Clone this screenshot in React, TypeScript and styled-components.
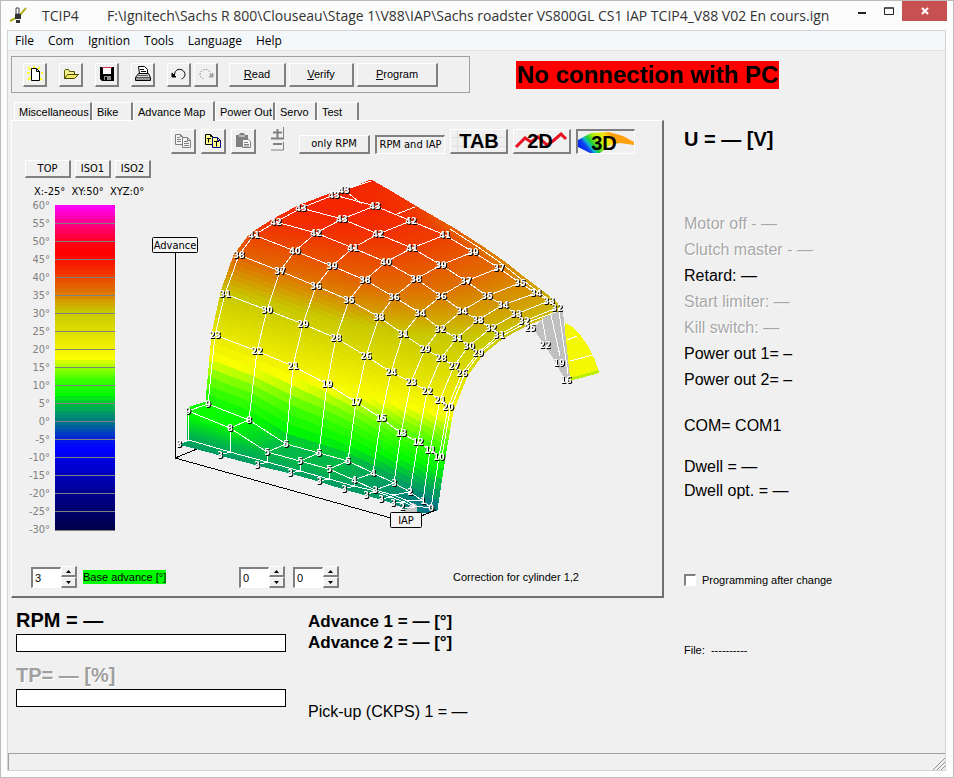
import React, { useId, useState } from "react";
import styled, { createGlobalStyle, css } from "styled-components";

const SANS = `"Liberation Sans", Arial, sans-serif`;
const DIALOG = `"DejaVu Sans Condensed", "DejaVu Sans", sans-serif`;
const SHELL = `"Open Sans", "Noto Sans", sans-serif`;

const GlobalStyle = createGlobalStyle`
  *, *::before, *::after { box-sizing: border-box; }
  body { margin: 0; background: #fcfcfc; color: #000; font: 11px/14px ${SANS}; }
  button, input { font: inherit; color: inherit; margin: 0; border-radius: 0; }
  button { padding: 0; border: 0; background: none; }
`;

/* ---------- colour scale ---------- */

type Stop = [number, number, number, number];
const STOPS: Stop[] = [
  [-30, 0, 0, 70],
  [-20, 0, 0, 138],
  [-7, 0, 0, 255],
  [-5, 0, 20, 235],
  [0, 0, 112, 140],
  [5, 0, 184, 72],
  [8, 0, 250, 0],
  [12, 62, 255, 0],
  [15, 140, 255, 0],
  [18, 250, 255, 0],
  [22, 236, 236, 0],
  [31, 200, 200, 0],
  [34, 212, 152, 0],
  [37, 224, 108, 0],
  [40, 234, 76, 0],
  [42, 242, 48, 0],
  [47, 255, 0, 0],
  [50, 255, 0, 20],
  [55, 255, 0, 130],
  [60, 255, 0, 245],
];

function colourFor(value: number): string {
  const v = Math.max(-30, Math.min(60, value));
  let i = 0;
  while (i < STOPS.length - 2 && STOPS[i + 1][0] < v) i++;
  const a = STOPS[i];
  const b = STOPS[i + 1];
  const t = (v - a[0]) / (b[0] - a[0]);
  const mix = (k: 1 | 2 | 3) => Math.round(a[k] + (b[k] - a[k]) * t);
  return `rgb(${mix(1)},${mix(2)},${mix(3)})`;
}

const SCALE_BANDS = Array.from({ length: 90 }, (_, i) => {
  const colour = colourFor(60 - i);
  return `${colour} ${((i * 100) / 90).toFixed(2)}% ${(((i + 1) * 100) / 90).toFixed(2)}%`;
}).join(", ");
const TICKS = Array.from({ length: 19 }, (_, i) => 60 - i * 5);

/* ---------- surface data: x, y, advance ---------- */

type Node = [number, number, number];
const ROWS: Node[][] = [
  [[179, 444, 3], [220, 455, 3], [257, 465, 3], [290, 473, 3], [319, 481, 3], [344, 489, 3], [366, 495, 3], [381, 499, 3], [393, 503, 2], [402, 507, 2]],
  [[189, 440, 4], [230, 452, 4], [267, 462, 4], [300, 471, 4], [329, 479, 4], [354, 486, 3], [375, 491, 3], [391, 497, 2], [404, 502, 2], [414, 507, 1]],
  [[188, 411, 9], [230, 428, 8], [267, 452, 5], [300, 461, 5], [329, 469, 5], [354, 480, 4], [375, 490, 3], [393, 495, 2], [406, 500, 1], [415, 506, 1]],
  [[208, 404, 9], [249, 420, 8], [286, 444, 5], [319, 453, 5], [348, 461, 5], [373, 473, 4], [394, 483, 3], [410, 492, 2], [423, 501, 1], [431, 508, 0]],
  [[215, 335, 23], [257, 351, 22], [293, 366, 21], [327, 384, 19], [356, 402, 17], [381, 418, 15], [401, 433, 13], [418, 442, 12], [430, 450, 11], [439, 457, 10]],
  [[225, 294, 31], [267, 310, 30], [303, 324, 29], [336, 338, 28], [366, 356, 26], [391, 372, 24], [411, 382, 23], [427, 391, 22], [440, 400, 21], [448, 407, 20]],
  [[239, 255, 38], [280, 271, 37], [316, 286, 36], [349, 300, 35], [379, 317, 33], [403, 334, 31], [425, 349, 29], [441, 358, 28], [454, 366, 27], [462, 373, 26]],
  [[254, 235, 41], [295, 251, 40], [332, 266, 39], [365, 280, 38], [394, 297, 36], [420, 313, 34], [440, 329, 32], [457, 338, 31], [469, 346, 30], [478, 353, 29]],
  [[276, 222, 42], [316, 233, 42], [353, 248, 41], [386, 262, 40], [416, 279, 38], [441, 296, 36], [462, 311, 34], [478, 320, 33], [491, 328, 32], [499, 335, 31]],
  [[301, 208, 43], [342, 219, 43], [378, 234, 42], [412, 248, 41], [441, 265, 39], [466, 281, 37], [487, 296, 35], [503, 305, 34], [516, 314, 33], [524, 321, 32]],
  [[334, 195, 43], [375, 206, 43], [411, 221, 42], [445, 235, 41], [473, 252, 39], [499, 268, 37], [520, 283, 35], [536, 293, 34], [549, 301, 33], [557, 308, 32]],
];
const BACK_EDGE: Node[] = [[371, 180, 43], [392, 192, 42], [422, 210, 41], [455, 229, 38], [483, 247, 36], [506, 263, 35], [526, 279, 34], [541, 290, 33], [553, 299, 32], [560, 306, 32]];
const LEFT_EDGE: Node[] = [[181, 447, 3], [187, 441, 3], [187, 408, 9], [206, 402, 9], [212, 334, 23], [221, 292, 31], [234, 255, 37], [250, 234, 40], [272, 220, 42], [298, 206, 43], [332, 193, 43]];
const RIGHT_EDGE: Node[] = [[413, 512, 2], [424, 512, 1], [430, 512, 0], [437, 510, 0], [445, 457, 10], [453, 411, 19], [467, 376, 25], [483, 354, 28], [503, 338, 31], [529, 324, 32], [559, 313, 32]];

interface Patch {
  points: string;
  fill: string;
}

function subdivide(a: Node, b: Node, c: Node, d: Node, steps: number): Patch[] {
  const at = (u: number, v: number, k: 0 | 1 | 2) =>
    a[k] * (1 - u) * (1 - v) + b[k] * u * (1 - v) + c[k] * u * v + d[k] * (1 - u) * v;
  const out: Patch[] = [];
  for (let i = 0; i < steps; i++) {
    for (let j = 0; j < steps; j++) {
      const corners = [[i, j], [i + 1, j], [i + 1, j + 1], [i, j + 1]];
      out.push({
        points: corners.map(([p, q]) => `${at(p / steps, q / steps, 0).toFixed(1)},${at(p / steps, q / steps, 1).toFixed(1)}`).join(" "),
        fill: colourFor(at((i + 0.5) / steps, (j + 0.5) / steps, 2)),
      });
    }
  }
  return out;
}

function patchesBetween(lines: Node[][], steps: number): Patch[] {
  const out: Patch[] = [];
  for (let r = 0; r < lines.length - 1; r++) {
    for (let c = 0; c < lines[r].length - 1; c++) {
      out.push(...subdivide(lines[r][c], lines[r][c + 1], lines[r + 1][c + 1], lines[r + 1][c], steps));
    }
  }
  return out;
}

const SURFACE: Patch[] = [
  ...patchesBetween([LEFT_EDGE, ROWS.map((r) => r[0])], 5),
  ...patchesBetween([ROWS.map((r) => r[9]), RIGHT_EDGE], 5),
  ...patchesBetween([ROWS[10], BACK_EDGE], 4),
  ...patchesBetween([...ROWS].reverse(), 8),
];

const path = (nodes: Node[]) => nodes.map(([x, y]) => `${x},${y}`).join(" ");

const EXTRA_LABELS: Node[] = [[344, 190, 43], [530, 328, 25], [545, 345, 22], [559, 363, 19], [566, 380, 16]];

const ChartSvg = styled.svg`
  display: block;
  width: 480px;
  max-width: 100%;
  height: auto;
  flex: 0 1 auto;
`;
const NodeLabels = styled.g`
  filter: drop-shadow(1px 1px 0 #000);
`;
const NodeText = styled.text`
  font: bold 9px/10px ${DIALOG};
  text-anchor: middle;
  fill: #fff;
`;
const AxisText = styled.text`
  font: 11px/14px ${DIALOG};
  text-anchor: middle;
`;

function SurfaceChart() {
  const labelled = ROWS.flatMap((row, r) => {
    if (r === 1) return [];
    if (r === 2) return row.slice(0, 7);
    if (r === 0) return row.map(([x, y], i) => [x, y, i < 9 ? 3 : 2] as Node);
    return row;
  });
  return (
    <ChartSvg viewBox="150 178 480 360" role="img" aria-label="Advance surface over RPM and IAP">
      <g shapeRendering="crispEdges">
        <polygon points="565,323 573,327 581,336 588,346 594,358 599,371 570,379 566,350" fill="#f4f800" />
        <polygon points="599,370 570,378 570,381 599,373" fill="#b8f000" />
        <polyline points="567,340 577,336" stroke="#fff" fill="none" />
        <polyline points="570,361 593,355" stroke="#fff" fill="none" />
        {SURFACE.map((p, i) => (
          <polygon key={i} points={p.points} fill={p.fill} stroke={p.fill} strokeWidth="1" />
        ))}
        <polygon points="533,328 543,318 559,311 563,312 570,378 564,378 553,358 543,343" fill="#c0c0c0" />
        <polygon points="402,513 413,503 417,505 417,513" fill="#c8c8c8" />
        <g stroke="#fff" fill="none">
          <polyline points="542,318 546,340" />
          <polyline points="551,315 560,356" />
          <polyline points="559,312 568,374" />
          {ROWS.slice(1).map((row, i) => <polyline key={i} points={path(row)} />)}
          {ROWS[0].map((_, c) => <polyline key={c} points={path(ROWS.map((r) => r[c]))} />)}
          <polyline points={path(RIGHT_EDGE.slice(4, 11).map(([x, y, v]) => [x - 3, y - 1, v] as Node))} />
          <polyline points="334,193 371,181" />
          <polyline points="344,190 362,204" />
          <polyline points="397,214 415,207" />
          <polyline points={path(BACK_EDGE.slice(3).map(([x, y, v]) => [x - 5, y, v] as Node))} />
        </g>
        <g stroke="#000" fill="none">
          <polyline points="175,252 175,458 391,518" />
          <polyline points="175,458 197,449" />
          <polyline points="421,516 436,510" />
        </g>
      </g>
      <NodeLabels>
        {[...labelled, ...EXTRA_LABELS].map(([x, y, value], i) => (
          <NodeText key={i} x={x} y={y + 3}>{value}</NodeText>
        ))}
      </NodeLabels>
      <rect x="152.5" y="237.5" width="45" height="15" rx="1" fill="#f4f4f4" stroke="#000" />
      <AxisText x="175" y="249">Advance</AxisText>
      <rect x="390.5" y="512.5" width="31" height="15" rx="1" fill="#f4f4f4" stroke="#000" />
      <AxisText x="406" y="524">IAP</AxisText>
    </ChartSvg>
  );
}

/* ---------- window frame ---------- */

const Frame = styled.div`
  display: flex;
  flex-direction: column;
  min-height: 100vh;
  padding: 0 7px 6px 6px;
  border: 1px solid #bcbcbc;
  background: #fcfcfc;
`;
const TitleBar = styled.header`
  display: flex;
  align-items: flex-start;
  height: 29px;
  margin-right: -1px;
  padding-left: 1px;
  font: 14px/29px ${SHELL};
  color: #333;
`;
const AppIcon = styled.svg`
  flex: none;
  width: 20px;
  height: 20px;
  margin: 5px 14px 0 0;
`;
const TitleName = styled.span`
  flex: none;
  width: 65px;
`;
const TitlePath = styled.h1`
  flex: 1;
  min-width: 0;
  margin: 0;
  overflow: hidden;
  white-space: nowrap;
  font: inherit;
`;
const CaptionButton = styled.button<{ $close?: boolean }>`
  display: grid;
  place-items: center;
  flex: none;
  width: ${(p) => (p.$close ? 45 : 27)}px;
  height: 20px;
  background: ${(p) => (p.$close ? "#c75050" : "transparent")};
`;
const Client = styled.div`
  display: flex;
  flex: 1;
  flex-direction: column;
  border: 1px solid #d4d4d4;
  background: #f0f0f0;
`;
const MenuBar = styled.nav`
  display: flex;
  gap: 14px;
  padding: 0 7px;
  border-bottom: 1px solid #e4e4e4;
  background: #f5f8fb;
  font: 12px/19px ${SHELL};
`;
const Content = styled.main`
  display: flex;
  flex: 1;
  flex-direction: column;
  padding: 5px 0 0 3px;
`;

/* ---------- controls ---------- */

const raised = css`
  border: solid;
  border-width: 1px 2px 2px 1px;
  border-color: #fff #808080 #808080 #fff;
`;
const sunken = css`
  border: solid;
  border-width: 2px 1px 1px 2px;
  border-color: #808080 #fff #fff #808080;
`;
const Bevel = styled.button<{ $w: number; $h?: number; $pressed?: boolean; $dialog?: boolean }>`
  ${(p) => (p.$pressed ? sunken : raised)}
  display: grid;
  place-items: center;
  flex: none;
  width: ${(p) => p.$w}px;
  height: ${(p) => p.$h ?? 24}px;
  overflow: hidden;
  background: #f0f0f0;
  font: 11px/14px ${(p) => (p.$dialog ? DIALOG : SANS)};
  white-space: nowrap;
`;
const TopRow = styled.div`
  display: flex;
  align-items: center;
  gap: 46px;
`;
const ToolBar = styled.div`
  display: flex;
  align-items: center;
  gap: 3px;
  width: 459px;
  height: 37px;
  padding: 0 11px;
  border: 1px solid #a0a0a0;
`;
const ToolGroup = styled.div<{ $gap: number; $after?: number }>`
  display: flex;
  gap: ${(p) => p.$gap}px;
  margin-right: ${(p) => p.$after ?? 0}px;
`;
const Alert = styled.strong`
  padding: 0 1px;
  background: #f00;
  font: bold 24px/28px ${SANS};
  white-space: nowrap;
`;
const Icon = styled.svg`
  display: block;
  width: 18px;
  height: 18px;
`;

/* ---------- main grid ---------- */

const Columns = styled.div`
  display: grid;
  flex: 1;
  grid-template-columns: minmax(0, 653fr) minmax(0, 281fr);
  padding-top: 7px;
`;
const LeftColumn = styled.div`
  display: flex;
  flex-direction: column;
`;
const TabList = styled.div`
  display: flex;
  align-items: flex-end;
  height: 20px;
  padding-left: 3px;
`;
const Tab = styled.button<{ $w: number; $active?: boolean }>`
  width: ${(p) => p.$w}px;
  height: ${(p) => (p.$active ? 20 : 18)}px;
  margin-bottom: ${(p) => (p.$active ? -1 : 0)}px;
  padding-left: 4px;
  border: solid;
  border-width: 1px 2px 0 1px;
  border-color: #fff #808080 #fff #fff;
  background: #f0f0f0;
  text-align: left;
  white-space: nowrap;
  z-index: ${(p) => (p.$active ? 1 : 0)};
`;
const Panel = styled.section`
  display: flex;
  flex-direction: column;
  padding: 8px 12px 8px 13px;
  border: solid;
  border-width: 1px 2px 2px 1px;
  border-color: #fff #707070 #707070 #fff;
`;
const MapTools = styled.div`
  display: flex;
  align-items: flex-end;
  gap: 5px;
  padding-left: 146px;
  height: 25px;
`;
const ViewRow = styled.div`
  display: flex;
  gap: 4px;
  padding-top: 6px;
`;
const PlotRow = styled.div`
  display: flex;
  align-items: flex-start;
`;
const ScaleColumn = styled.div`
  flex: none;
  width: 125px;
  padding-top: 7px;
`;
const Rotation = styled.p`
  margin: 0 0 6px;
  padding-left: 9px;
  font: 11px/14px ${DIALOG};
  white-space: pre;
`;
const Scale = styled.div`
  display: flex;
  gap: 5px;
`;
const ScaleNumbers = styled.div`
  width: 25px;
  margin-top: -8px;
  color: #808080;
  font: 11px/18px ${DIALOG};
  text-align: right;
`;
const ScaleBar = styled.div`
  width: 60px;
  height: 326px;
  border-bottom: 1px solid #808080;
  background: linear-gradient(${SCALE_BANDS});
`;
const ScaleCell = styled.div`
  height: 18px;
  & + & { border-top: 1px solid #808080; }
`;
const Adjustments = styled.div`
  display: grid;
  grid-template-columns: 208px 54px 160px 1fr;
  align-items: center;
  padding: 27px 0 0 6px;
`;
const AdjustCell = styled.div`
  display: flex;
  align-items: center;
  gap: 6px;
  white-space: nowrap;
`;
const SpinBox = styled.span`
  display: flex;
  align-items: center;
`;
const SpinInput = styled.input`
  ${sunken}
  width: 30px;
  height: 21px;
  padding: 0 2px;
  background: #fff;
  outline: 0;
`;
const SpinButtons = styled.span`
  display: grid;
  width: 16px;
`;
const SpinButton = styled.button`
  ${raised}
  display: grid;
  place-items: center;
  height: 11px;
`;
const GreenLabel = styled.label`
  background: #0f0;
`;

/* ---------- read-outs ---------- */

const Readouts = styled.div`
  display: grid;
  grid-template-columns: 270px 1fr;
  column-gap: 22px;
  padding: 9px 0 0 5px;
`;
const Gauges = styled.div`
  display: flex;
  flex-direction: column;
`;
const GaugeTitle = styled.h2<{ $off?: boolean }>`
  margin: 0;
  font: bold 20px/27px ${SANS};
  color: ${(p) => (p.$off ? "#a0a0a0" : "#000")};
  text-shadow: ${(p) => (p.$off ? "1px 1px #fff" : "none")};
`;
const GaugeTrack = styled.div`
  height: 18px;
  margin-bottom: 10px;
  border: 1px solid #000;
  background: #fff;
`;
const AdvanceList = styled.div`
  display: flex;
  flex-direction: column;
  padding: 4px 0;
  gap: 48px;
`;
const Reading = styled.p<{ $line?: number; $off?: boolean; $strong?: boolean }>`
  margin: 0;
  font: ${(p) => (p.$strong ? "bold 17px" : "normal 16px")}/${(p) => p.$line ?? 26}px ${SANS};
  color: ${(p) => (p.$off ? "#a8a8a8" : "#000")};
  text-shadow: ${(p) => (p.$off ? "1px 1px #fff" : "none")};
  white-space: nowrap;
`;
const RightColumn = styled.aside`
  display: flex;
  flex-direction: column;
  padding: 25px 0 0 20px;
`;
const Voltage = styled.h2`
  margin: 0 0 58px;
  font: bold 20px/28px ${SANS};
`;
const ReadingGroup = styled.div<{ $after: number }>`
  margin-bottom: ${(p) => p.$after}px;
`;
const CheckLabel = styled.label`
  display: flex;
  align-items: center;
  gap: 6px;
`;
const CheckBox = styled.input`
  ${sunken}
  appearance: none;
  width: 12px;
  height: 12px;
  background: #fff;
`;
const FileLine = styled.p`
  margin: 56px 0 0;
  white-space: pre;
`;
const StatusBar = styled.footer`
  display: flex;
  align-items: flex-end;
  justify-content: flex-end;
  height: 17px;
  border-top: 1px solid #a0a0a0;
  border-left: 1px solid #a0a0a0;
`;

/* ---------- icons ---------- */

const NewIcon = () => (
  <Icon viewBox="0 0 18 18">
    <path d="M2 2l3 3M14 2l-2 2M1 8h3M2 15l3-3M16 15l-3-3M15 8h2M8 1v2" stroke="#ffff30" strokeWidth="2" />
    <path d="M5.5 3.5h5l3 3v9h-8zM10.5 3.5v3h3" fill="#fff" stroke="#000" />
  </Icon>
);
const OpenIcon = () => (
  <Icon viewBox="0 0 18 18">
    <path d="M2.5 13.5v-8l1-1h3l1 2h5v3" fill="#f4f48c" stroke="#555500" />
    <path d="M2.5 13.5l3-4h11l-4 4z" fill="#f2ee60" stroke="#444400" />
  </Icon>
);
const SaveIcon = () => (
  <Icon viewBox="0 0 18 18">
    <path d="M2 2h14v14H4l-2-2z" fill="#000" />
    <path d="M5 3h8v6H5z" fill="#fff" />
    <path d="M4 2h10v1H4z" fill="#d03050" />
    <path d="M6 11h7v4H6z" fill="#909090" />
    <path d="M7 12h2v3H7z" fill="#000" />
  </Icon>
);
const PrintIcon = () => (
  <Icon viewBox="0 0 18 18" fill="#fff" stroke="#000">
    <path d="M5.5 8.5l-1-7h6l3 3v4" />
    <path d="M6 4.5h4M7 6.5h5" />
    <path d="M1.5 12.5l3-4h10l2 4v3h-15z" fill="#d8d8d8" />
    <path d="M2 12.5h14M4 10.5h10M2 14h14" fill="none" stroke="#555" />
  </Icon>
);
const TurnIcon = ({ redo }: { redo?: boolean }) => (
  <Icon viewBox="0 0 18 18">
    <g transform={redo ? "translate(18 0) scale(-1 1)" : undefined} fill="none" stroke={redo ? "#a0a0a0" : "#000"}>
      <path d="M4.5 10c0-6 6-7 9-4s1 7-2 8" strokeDasharray={redo ? "2 1" : undefined} />
      <path d="M2 8v4h4z" fill={redo ? "#a0a0a0" : "#000"} />
    </g>
  </Icon>
);
const CopyIcon = ({ table }: { table?: boolean }) => {
  const fill = table ? "#ffff90" : "#f4f4f4";
  const ink = table ? "#000" : "#808080";
  return (
    <Icon viewBox="0 0 18 18" fill={fill} stroke={ink}>
      <path d="M1.5 2.5h5l2 2v8h-7zM6.5 2.5v2h2" />
      {table ? <path d="M3 6.5h4M4.5 6.5v4" /> : <path d="M3 5.5h3M3 7.5h4M3 9.5h4" />}
      <path d="M8.5 5.5h5l3 3v7h-8zM13.5 5.5v3h3" stroke={table ? "#000080" : ink} />
      {table ? <path d="M10 9.5h5M12.5 9.5v5" /> : <path d="M10 9.5h4M10 11.5h5M10 13.5h5" />}
    </Icon>
  );
};
const PasteIcon = () => (
  <Icon viewBox="0 0 18 18">
    <path d="M2 3h3l1-2h4l1 2h3v12H2z" fill="#808080" />
    <path d="M5 4h6" stroke="#eee" />
    <path d="M8.5 7.5h6l2 2v6h-8z" fill="#f4f4f4" stroke="#808080" />
    <path d="M10 10.5h4M10 12.5h5M10 14h5" stroke="#808080" />
  </Icon>
);
const WideIcon = styled.svg`
  display: block;
  width: 56px;
  height: 22px;
`;
const WideText = styled.text`
  font: bold 20px/22px ${SANS};
  text-anchor: middle;
`;
const TabIcon = () => (
  <WideIcon viewBox="0 0 56 22">
    <path d="M0 7.5h56M6.5 0v22M0 16.5h56" stroke="#e0e0e0" />
    <WideText x="28" y="18">TAB</WideText>
  </WideIcon>
);
const CurveIcon = () => (
  <WideIcon viewBox="0 0 56 22">
    <path d="M2 17L11 8l6 4 7-5 9 8 6-4 8-7 5 5" fill="none" stroke="#e81020" strokeWidth="3" />
    <WideText x="26" y="18">2D</WideText>
  </WideIcon>
);
const SolidIcon = () => {
  const id = useId();
  return (
    <WideIcon viewBox="0 0 56 22">
      <linearGradient id={id} gradientUnits="userSpaceOnUse" x1="4" y1="21" x2="30" y2="0">
        <stop offset="0" stopColor="#0020f0" />
        <stop offset="0.2" stopColor="#1040f0" />
        <stop offset="0.3" stopColor="#10b8d0" />
        <stop offset="0.4" stopColor="#20d030" />
        <stop offset="0.6" stopColor="#c0f010" />
        <stop offset="0.85" stopColor="#f8e010" />
        <stop offset="1" stopColor="#ffa010" />
      </linearGradient>
      <path d="M0 9L13 2l18-1 14 4 11 6v3l-14-2-10 2-10 8H12L0 16z" fill={`url(#${id})`} />
      <WideText x="26" y="19">3D</WideText>
    </WideIcon>
  );
};
const Arrow = ({ down }: { down?: boolean }) => (
  <svg width="5" height="3" viewBox="0 0 5 3">
    <path d={down ? "M0 0h5L2.5 3z" : "M0 3h5L2.5 0z"} />
  </svg>
);

function Spin({ id, label, initial }: { id: string; label?: string; initial: number }) {
  const [value, setValue] = useState(String(initial));
  const step = (by: number) => setValue((v) => String((Number(v) || 0) + by));
  return (
    <SpinBox>
      <SpinInput id={id} aria-label={label} value={value} onChange={(e) => setValue(e.target.value)} />
      <SpinButtons>
        <SpinButton aria-label="Increase" onClick={() => step(1)}><Arrow /></SpinButton>
        <SpinButton aria-label="Decrease" onClick={() => step(-1)}><Arrow down /></SpinButton>
      </SpinButtons>
    </SpinBox>
  );
}

const MENUS = ["File", "Com", "Ignition", "Tools", "Language", "Help"];
const TABS: { name: string; w: number }[] = [
  { name: "Miscellaneous", w: 78 },
  { name: "Bike", w: 41 },
  { name: "Advance Map", w: 82 },
  { name: "Power Out", w: 60 },
  { name: "Servo", w: 42 },
  { name: "Test", w: 42 },
];

export default function App() {
  return (
    <>
      <GlobalStyle />
      <Frame>
        <TitleBar>
          <AppIcon viewBox="0 0 20 20">
            <path d="M2 15l6-3 4-3 6-7" fill="none" stroke="#b0b020" strokeWidth="2" />
            <path d="M8 2h3v6H8z" fill="#fff" stroke="#444" />
            <path d="M7 8h6v5H7zM8 14h4v3H8z" fill="#333" />
          </AppIcon>
          <TitleName>TCIP4</TitleName>
          <TitlePath>F:\Ignitech\Sachs R 800\Clouseau\Stage 1\V88\IAP\Sachs roadster VS800GL CS1 IAP TCIP4_V88 V02 En cours.ign</TitlePath>
          <CaptionButton aria-label="Minimize">
            <svg width="8" height="8"><path d="M0 5h8v2H0z" fill="#222" /></svg>
          </CaptionButton>
          <CaptionButton aria-label="Maximize">
            <svg width="10" height="8"><path d="M.5 1h9v6.5h-9zM0 1h10" fill="none" stroke="#222" /></svg>
          </CaptionButton>
          <CaptionButton $close aria-label="Close">
            <svg width="8" height="8"><path d="M1 1l6 6M7 1L1 7" stroke="#fff" strokeWidth="2" /></svg>
          </CaptionButton>
        </TitleBar>
        <Client>
          <MenuBar>
            {MENUS.map((m) => <button key={m}>{m}</button>)}
          </MenuBar>
          <Content>
            <TopRow>
              <ToolBar role="toolbar" aria-label="File and device">
                <ToolGroup $gap={12} $after={9}>
                  <Bevel $w={24} aria-label="New"><NewIcon /></Bevel>
                  <Bevel $w={24} aria-label="Open"><OpenIcon /></Bevel>
                  <Bevel $w={24} aria-label="Save"><SaveIcon /></Bevel>
                  <Bevel $w={24} aria-label="Print"><PrintIcon /></Bevel>
                </ToolGroup>
                <ToolGroup $gap={3} $after={8}>
                  <Bevel $w={24} aria-label="Undo"><TurnIcon /></Bevel>
                  <Bevel $w={24} aria-label="Redo" disabled><TurnIcon redo /></Bevel>
                </ToolGroup>
                <Bevel $w={57}><span><u>R</u>ead</span></Bevel>
                <Bevel $w={65}><span><u>V</u>erify</span></Bevel>
                <Bevel $w={81}><span><u>P</u>rogram</span></Bevel>
              </ToolBar>
              <Alert role="status">No connection with PC</Alert>
            </TopRow>
            <Columns>
              <LeftColumn>
                <TabList role="tablist">
                  {TABS.map((t) => (
                    <Tab key={t.name} role="tab" $w={t.w} $active={t.name === "Advance Map"} aria-selected={t.name === "Advance Map"}>
                      {t.name}
                    </Tab>
                  ))}
                </TabList>
                <Panel>
                  <MapTools>
                    <ToolGroup $gap={5}>
                      <Bevel $w={25} $h={25} aria-label="Copy" disabled><CopyIcon /></Bevel>
                      <Bevel $w={25} $h={25} aria-label="Copy table"><CopyIcon table /></Bevel>
                      <Bevel $w={25} $h={25} aria-label="Paste" disabled><PasteIcon /></Bevel>
                    </ToolGroup>
                    <ToolGroup $gap={5} $after={3}>
                      <button aria-label="Change step">
                        <svg width="30" height="25" viewBox="2 0 30 25" fill="none" stroke="#808080">
                          <path d="M18.5 3v9M14 6.5h9M12 12.5h13" strokeWidth="2" />
                          <path d="M14 18h9" strokeWidth="2" />
                          <path d="M24.5 1v12M24.5 16v8M12 24h13" />
                        </svg>
                      </button>
                    </ToolGroup>
                    <Bevel $dialog $w={71} $h={19}>only RPM</Bevel>
                    <Bevel $dialog $w={70} $h={19} $pressed>RPM and IAP</Bevel>
                    <Bevel $w={58} $h={25} aria-label="Table view"><TabIcon /></Bevel>
                    <Bevel $w={58} $h={25} aria-label="Curve view"><CurveIcon /></Bevel>
                    <Bevel $w={59} $h={25} $pressed aria-label="Surface view"><SolidIcon /></Bevel>
                  </MapTools>
                  <ViewRow>
                    <Bevel $dialog $w={46} $h={18}>TOP</Bevel>
                    <Bevel $dialog $w={36} $h={18}>ISO1</Bevel>
                    <Bevel $dialog $w={36} $h={18}>ISO2</Bevel>
                  </ViewRow>
                  <PlotRow>
                    <ScaleColumn>
                      <Rotation>X:-25°  XY:50°  XYZ:0°</Rotation>
                      <Scale>
                        <ScaleNumbers>
                          {TICKS.map((t) => <div key={t}>{t}°</div>)}
                        </ScaleNumbers>
                        <ScaleBar>
                          {TICKS.slice(1).map((t) => <ScaleCell key={t} />)}
                        </ScaleBar>
                      </Scale>
                    </ScaleColumn>
                    <SurfaceChart />
                  </PlotRow>
                  <Adjustments>
                    <AdjustCell>
                      <Spin id="base-advance" initial={3} />
                      <GreenLabel htmlFor="base-advance">Base advance [°]</GreenLabel>
                    </AdjustCell>
                    <Spin id="correction-1" label="Correction for cylinder 1" initial={0} />
                    <Spin id="correction-2" label="Correction for cylinder 2" initial={0} />
                    <AdjustCell>Correction for cylinder 1,2</AdjustCell>
                  </Adjustments>
                </Panel>
                <Readouts>
                  <Gauges>
                    <GaugeTitle>RPM = —</GaugeTitle>
                    <GaugeTrack role="progressbar" aria-label="RPM" />
                    <GaugeTitle $off>TP= — [%]</GaugeTitle>
                    <GaugeTrack role="progressbar" aria-label="Throttle position" />
                  </Gauges>
                  <AdvanceList>
                    <div>
                      <Reading $strong $line={21}>Advance 1 = — [°]</Reading>
                      <Reading $strong $line={21}>Advance 2 = — [°]</Reading>
                    </div>
                    <Reading $line={21}>Pick-up (CKPS) 1 = —</Reading>
                  </AdvanceList>
                </Readouts>
              </LeftColumn>
              <RightColumn>
                <Voltage>U = — [V]</Voltage>
                <ReadingGroup $after={20}>
                  <Reading $off>Motor off - —</Reading>
                  <Reading $off>Clutch master - —</Reading>
                  <Reading>Retard: —</Reading>
                  <Reading $off>Start limiter: —</Reading>
                  <Reading $off>Kill switch: —</Reading>
                  <Reading>Power out 1= –</Reading>
                  <Reading>Power out 2= –</Reading>
                </ReadingGroup>
                <ReadingGroup $after={16}>
                  <Reading>COM= COM1</Reading>
                </ReadingGroup>
                <ReadingGroup $after={70}>
                  <Reading $line={24}>Dwell = —</Reading>
                  <Reading $line={24}>Dwell opt. = —</Reading>
                </ReadingGroup>
                <CheckLabel>
                  <CheckBox type="checkbox" />
                  Programming after change
                </CheckLabel>
                <FileLine>File:  ----------</FileLine>
              </RightColumn>
            </Columns>
          </Content>
          <StatusBar>
            <svg width="13" height="13" viewBox="0 0 13 13" aria-hidden="true">
              <path d="M1 13L13 1M5 13l8-8M9 13l4-4" stroke="#909090" strokeWidth="1" />
            </svg>
          </StatusBar>
        </Client>
      </Frame>
    </>
  );
}
